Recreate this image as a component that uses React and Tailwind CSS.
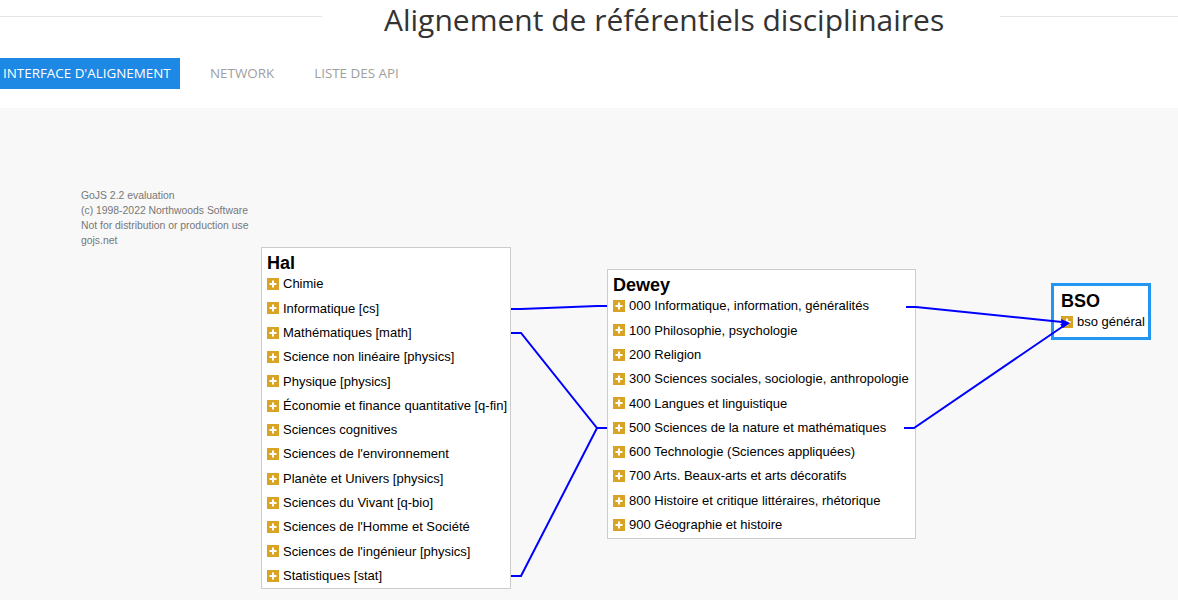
const hal = [
  'Chimie',
  'Informatique [cs]',
  'Mathématiques [math]',
  'Science non linéaire [physics]',
  'Physique [physics]',
  'Économie et finance quantitative [q-fin]',
  'Sciences cognitives',
  "Sciences de l'environnement",
  'Planète et Univers [physics]',
  'Sciences du Vivant [q-bio]',
  "Sciences de l'Homme et Société",
  "Sciences de l'ingénieur [physics]",
  'Statistiques [stat]',
];

const dewey = [
  '000 Informatique, information, généralités',
  '100 Philosophie, psychologie',
  '200 Religion',
  '300 Sciences sociales, sociologie, anthropologie',
  '400 Langues et linguistique',
  '500 Sciences de la nature et mathématiques',
  '600 Technologie (Sciences appliquées)',
  '700 Arts. Beaux-arts et arts décoratifs',
  '800 Histoire et critique littéraires, rhétorique',
  '900 Géographie et histoire',
];

function PlusIcon() {
  return (
    <svg width="12" height="12" viewBox="0 0 12 12" className="shrink-0">
      <rect width="12" height="12" fill="#d9a425" />
      <path d="M6 2.5v7M2.5 6h7" stroke="#fff" strokeWidth="2" />
    </svg>
  );
}

function Node({ title, items, className }) {
  return (
    <div className={`absolute bg-white flex flex-col font-['Liberation_Sans',Arial,sans-serif] text-black ${className}`}>
      <div className="h-[22px] leading-[26px] text-[18px] font-bold">{title}</div>
      {items.map((item) => (
        <div key={item} className="h-[24.3px] flex items-center gap-[4px] text-[13px] whitespace-nowrap">
          <PlusIcon />
          <span>{item}</span>
        </div>
      ))}
    </div>
  );
}

export default function App() {
  return (
    <div className="w-[1178px] h-[600px] overflow-hidden bg-white font-['Open_Sans',sans-serif]">
      {/* titre */}
      <div className="h-[40px] flex items-center">
        <div className="w-[322px] h-px bg-[#e5e5e5] mt-[-8px]" />
        <h1 className="ml-[62px] text-[30px] leading-[40px] text-[#333] whitespace-nowrap">
          Alignement de référentiels disciplinaires
        </h1>
        <div className="flex-1 ml-[56px] h-px bg-[#e5e5e5] mt-[-8px]" />
      </div>

      {/* onglets */}
      <nav className="mt-[18px] flex items-center h-[31px] text-[13.4px] uppercase">
        <a className="h-full w-[180px] pl-[3px] flex items-center bg-[#1e88e5] text-white">Interface d'alignement</a>
        <a className="ml-[30px] text-[#9e9e9e]">Network</a>
        <a className="ml-[40px] text-[#9e9e9e]">Liste des API</a>
      </nav>

      {/* diagramme */}
      <div className="relative mt-[19px] h-[492px] bg-[#f8f8f8]">
        <div className="absolute left-[81px] top-[80px] text-[10.4px] leading-[15px] text-[#777] font-['Liberation_Sans',Arial,sans-serif]">
          <div>GoJS 2.2 evaluation</div>
          <div>(c) 1998-2022 Northwoods Software</div>
          <div>Not for distribution or production use</div>
          <div>gojs.net</div>
        </div>

        <Node title="Hal" items={hal} className="left-[261px] top-[139px] w-[250px] h-[342px] border border-[#ccc] pl-[5px] pt-[2px]" />
        <Node title="Dewey" items={dewey} className="left-[607px] top-[161px] w-[309px] h-[270px] border border-[#ccc] pl-[5px] pt-[2px]" />
        <Node title="BSO" items={['bso général']} className="left-[1051px] top-[175px] w-[100px] h-[57px] border-[3px] border-[#2196f3] pl-[7px] pt-[2px]" />

        <svg className="absolute left-0 top-0 pointer-events-none" width="1178" height="492" viewBox="0 108 1178 492">
          <g fill="none" stroke="#0000ff" strokeWidth="2">
            <path d="M511 309 L521 309 L597 306 L607 306" />
            <path d="M511 333 L521 333 L597 428 L607 428" />
            <path d="M511 576 L521 576 L597 428 L607 428" />
            <path d="M906 307 L916 307 L1062 322 L1068 323" />
            <path d="M904 428 L914 428 L1062 327 L1068 323" />
          </g>
          <g fill="#0000ff">
            <polygon points="1070,323 1061,319 1062,325" />
            <polygon points="1070,323 1063,328 1060,324" />
          </g>
        </svg>
      </div>
    </div>
  );
}
